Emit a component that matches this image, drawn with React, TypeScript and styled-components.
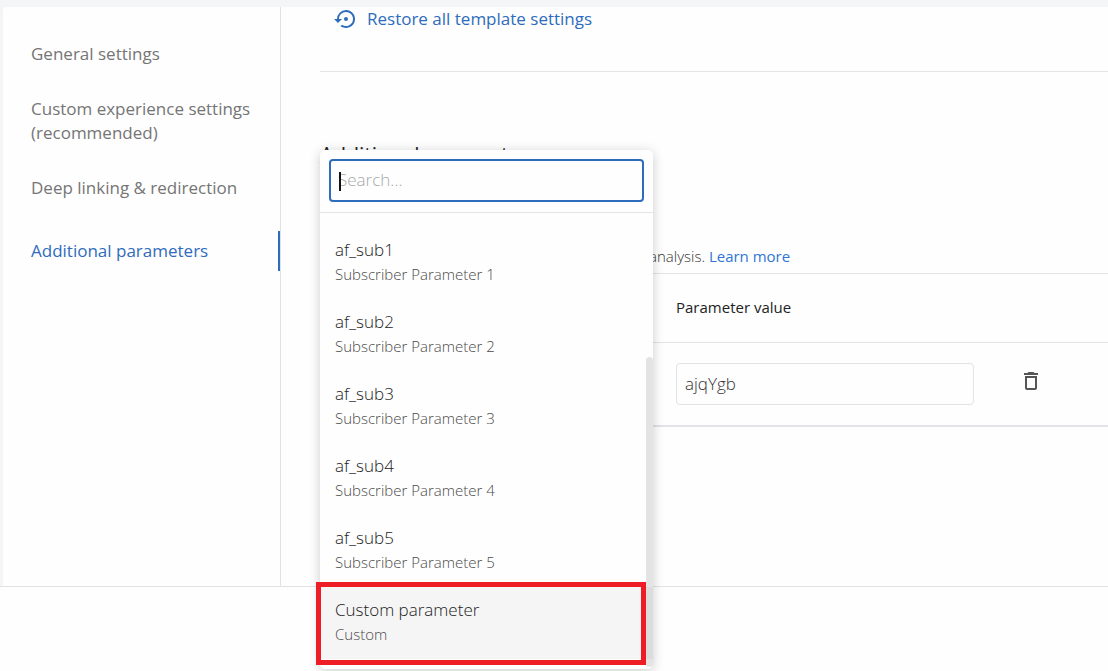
import React from "react";
import styled, { createGlobalStyle } from "styled-components";
import { MdDeleteOutline, MdSettingsBackupRestore } from "react-icons/md";

const GlobalStyle = createGlobalStyle`
  *, *::before, *::after { box-sizing: border-box; }
  body {
    margin: 0;
    background: #fefefe;
    color: #333;
    font-family: "Open Sans", "Noto Sans", sans-serif;
    font-size: 15px;
    font-weight: 300;
    line-height: 24px;
  }
  button, input { font: inherit; color: inherit; }
`;

const Screen = styled.div`
  min-height: 100vh;
`;

const Page = styled.div`
  padding: 7px 0 0 3px;
  background: #f4f5f7;
  border-bottom: 1px solid #e2e3e5;
`;

const Panel = styled.div`
  display: flex;
  background: #fefefe;
  border-top-left-radius: 4px;
`;

const Sidebar = styled.nav`
  flex: 0 0 278px;
  display: flex;
  flex-direction: column;
  gap: 15px;
  padding-top: 27px;
  border-right: 1px solid #dfe2e7;
`;

const NavLink = styled.a<{ $active?: boolean }>`
  margin-top: ${(p) => (p.$active ? 8 : 0)}px;
  padding: 8px 24px 8px 28px;
  border-right: 2px solid ${(p) => (p.$active ? "#2f6cbb" : "transparent")};
  color: ${(p) => (p.$active ? "#2f6cbb" : "#757575")};
  font-size: 17px;
  font-weight: 400;
  text-decoration: none;
`;

const Main = styled.main`
  flex: 1;
  min-width: 0;
  padding: 0 0 159px 39px;
`;

const RestoreRow = styled.div`
  padding-bottom: 40px;
  border-bottom: 1px solid #e2e5e8;
`;

const RestoreButton = styled.button`
  display: flex;
  align-items: center;
  gap: 9px;
  padding: 0 14px;
  border: 0;
  background: none;
  color: #2f6cbb;
  font-size: 17px;
  font-weight: 400;
`;

const Section = styled.section`
  position: relative;
  padding-top: 69px;
`;

const Title = styled.h2`
  margin: 0;
  color: #222;
  font-size: 21px;
  font-weight: 500;
  line-height: 28px;
`;

const Description = styled.p`
  margin: 75px 0 5px;
  padding-left: 329px;
  white-space: nowrap;
`;

const Link = styled.a`
  color: #2f76d2;
  font-weight: 400;
  text-decoration: none;
`;

const Table = styled.table`
  width: 100%;
  border-collapse: separate;
  border-spacing: 0;
  table-layout: fixed;
  border-top: 1px solid #e2e3e5;
  border-bottom: 2px solid #e2e3e8;
`;

const HeadCell = styled.th<{ $width?: number }>`
  width: ${(p) => (p.$width ? `${p.$width}px` : "auto")};
  height: 69px;
  padding: 0 0 2px;
  border-bottom: 1px solid #e2e3e5;
  color: #222;
  font-weight: 400;
  text-align: left;
`;

const Cell = styled.td`
  padding: 20px 0;
`;

const ActionCell = styled(Cell)`
  padding: 17px 0 23px;
`;

const ValueInput = styled.input`
  display: block;
  width: 298px;
  height: 42px;
  padding: 0 8px 2px;
  border: 1px solid #e2e3e5;
  border-radius: 4px;
  background: #fefefe;
  font-size: 17px;
`;

const IconButton = styled.button`
  display: block;
  padding: 0;
  border: 0;
  background: none;
  color: #555;
  svg { display: block; }
`;

const Dropdown = styled.div`
  position: absolute;
  top: 78px;
  left: 0;
  width: 333px;
  border-radius: 5px;
  background: #fefefe;
  box-shadow: 0 2px 12px rgba(0, 0, 0, 0.2);
`;

const SearchRow = styled.div`
  position: relative;
  padding: 9px 9px 10px;
  border-bottom: 1px solid #e2e5e8;
`;

const SearchInput = styled.input`
  display: block;
  width: 100%;
  height: 43px;
  padding: 0 7px 2px;
  border: 2px solid #2f6cbb;
  border-radius: 4px;
  outline: 0;
  background: #fefefe;
  font-size: 17px;
  &::placeholder { color: #a8a8a8; opacity: 1; }
`;

const Caret = styled.span`
  position: absolute;
  top: 22px;
  left: 19px;
  width: 2px;
  height: 19px;
  background: #111;
`;

const Options = styled.ul`
  position: relative;
  margin: 0;
  padding: 14px 0 10px;
  list-style: none;
`;

const Option = styled.li<{ $highlighted?: boolean }>`
  position: relative;
  padding: 11px 15px 13px;
  background: ${(p) => (p.$highlighted ? "#f5f5f5" : "transparent")};
`;

const OptionName = styled.div`
  color: #222;
  font-size: 17px;
`;

const OptionHint = styled.div`
  color: #4a4a4a;
`;

const ScrollThumb = styled.span`
  position: absolute;
  top: 144px;
  right: 0;
  bottom: 2px;
  width: 7px;
  border-radius: 4px;
  background: rgba(0, 0, 0, 0.1);
`;

const Callout = styled.span`
  position: absolute;
  inset: -5px 7px -6px -4px;
  border: 5px solid #ee1c25;
`;

const navItems = [
  "General settings",
  "Custom experience settings (recommended)",
  "Deep linking & redirection",
  "Additional parameters",
];

const options = [
  ...[1, 2, 3, 4, 5].map((n) => ({ name: `af_sub${n}`, hint: `Subscriber Parameter ${n}` })),
  { name: "Custom parameter", hint: "Custom" },
];

export default function App() {
  return (
    <Screen>
      <GlobalStyle />
      <Page>
        <Panel>
          <Sidebar>
            {navItems.map((item) => (
              <NavLink key={item} href="#" $active={item === "Additional parameters"}>
                {item}
              </NavLink>
            ))}
          </Sidebar>
          <Main>
            <RestoreRow>
              <RestoreButton type="button">
                <MdSettingsBackupRestore size={24} />
                Restore all template settings
              </RestoreButton>
            </RestoreRow>
            <Section>
              <Title>Additional parameters</Title>
              <Description>
                analysis. <Link href="#">Learn more</Link>
              </Description>
              <Table>
                <thead>
                  <tr>
                    <HeadCell $width={356} scope="col" aria-label="Parameter" />
                    <HeadCell $width={343} scope="col" id="value-heading">Parameter value</HeadCell>
                    <HeadCell scope="col" aria-label="Actions" />
                  </tr>
                </thead>
                <tbody>
                  <tr>
                    <Cell />
                    <Cell>
                      <ValueInput aria-labelledby="value-heading" defaultValue="ajqYgb" />
                    </Cell>
                    <ActionCell>
                      <IconButton type="button" aria-label="Delete parameter">
                        <MdDeleteOutline size={24} />
                      </IconButton>
                    </ActionCell>
                  </tr>
                </tbody>
              </Table>
              <Dropdown>
                <SearchRow>
                  <SearchInput type="text" aria-label="Search parameters" placeholder="Search..." />
                  <Caret />
                </SearchRow>
                <Options>
                  {options.map(({ name, hint }) => (
                    <Option key={name} $highlighted={hint === "Custom"}>
                      <OptionName>{name}</OptionName>
                      <OptionHint>{hint}</OptionHint>
                      {hint === "Custom" && <Callout />}
                    </Option>
                  ))}
                  <ScrollThumb />
                </Options>
              </Dropdown>
            </Section>
          </Main>
        </Panel>
      </Page>
    </Screen>
  );
}
